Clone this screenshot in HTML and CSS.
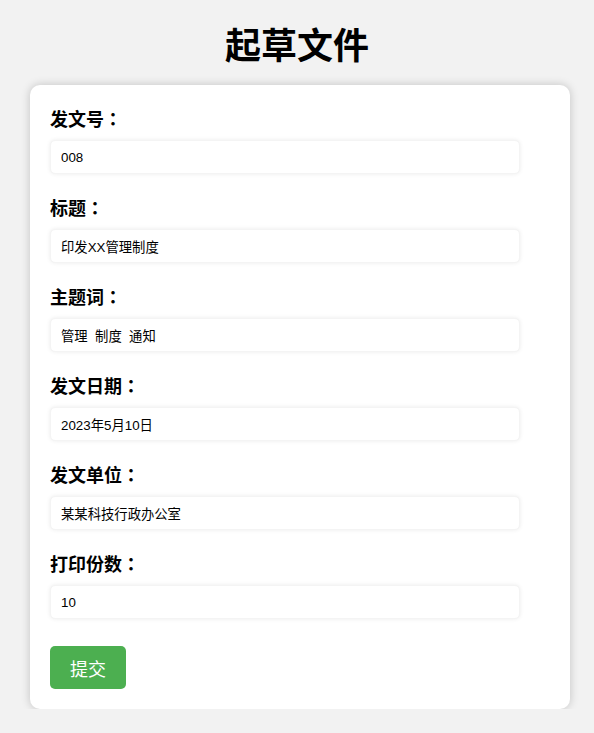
FILE: index.html
```html
<!DOCTYPE html>
<html lang="zh">
<head>
<meta charset="utf-8">
<title>起草文件</title>
<link rel="stylesheet" href="styles.css">
</head>
<body>
<h1 class="title">起草文件</h1>
<form class="card">
  <div class="group">
    <label class="label">发文号<span class="colon">：</span></label>
    <input class="field" type="text" value="008">
  </div>
  <div class="group">
    <label class="label">标题<span class="colon">：</span></label>
    <input class="field" type="text" value="印发XX管理制度">
  </div>
  <div class="group">
    <label class="label">主题词<span class="colon">：</span></label>
    <input class="field" type="text" value="管理  制度  通知">
  </div>
  <div class="group">
    <label class="label">发文日期<span class="colon">：</span></label>
    <input class="field" type="text" value="2023年5月10日">
  </div>
  <div class="group">
    <label class="label">发文单位<span class="colon">：</span></label>
    <input class="field" type="text" value="某某科技行政办公室">
  </div>
  <div class="group">
    <label class="label">打印份数<span class="colon">：</span></label>
    <input class="field" type="text" value="10">
  </div>
  <button class="submit" type="button">提交</button>
</form>
</body>
</html>
```

FILE: styles.css
```css
html, body {
  margin: 0;
  padding: 0;
}
body {
  background: #f2f2f2;
  font-family: "Liberation Sans", "Noto Sans CJK SC", sans-serif;
  color: #000;
}
.title {
  margin: 17px 0 16px;
  font-family: "Noto Sans CJK SC", sans-serif;
  font-size: 36px;
  line-height: 52px;
  font-weight: 700;
  text-align: center;
}
.card {
  box-sizing: border-box;
  width: 540px;
  margin: 0 30px;
  padding: 20px;
  background: #fff;
  border-radius: 10px;
  box-shadow: 0 0 10px rgba(0, 0, 0, 0.2);
}
.group {
  display: flex;
  flex-direction: column;
  align-items: flex-start;
  margin-bottom: 20px;
}
.label {
  display: block;
  font-family: "Noto Sans CJK SC", sans-serif;
  font-size: 18px;
  font-weight: 700;
  line-height: 26px;
  margin-bottom: 9px;
}
.colon {
  font-family: "Noto Sans CJK JP", "Noto Sans CJK SC", sans-serif;
  font-feature-settings: "locl" 0;
}
.field {
  box-sizing: border-box;
  width: 470px;
  height: 34px;
  padding: 0 10px;
  border: 1px solid #f4f4f4;
  border-radius: 5px;
  box-shadow: 0 0 4px rgba(0, 0, 0, 0.08);
  font-family: "Liberation Sans", "Noto Sans CJK SC", sans-serif;
  font-size: 13.333px;
  color: #000;
  background: #fff;
  outline: none;
  white-space: pre;
}
.submit {
  display: block;
  margin-top: 27px;
  width: 76px;
  height: 43px;
  padding: 0;
  border: none;
  border-radius: 5px;
  background: #4caf50;
  color: #fff;
  font-family: "Noto Sans CJK SC", sans-serif;
  font-size: 18px;
  cursor: pointer;
}
```
